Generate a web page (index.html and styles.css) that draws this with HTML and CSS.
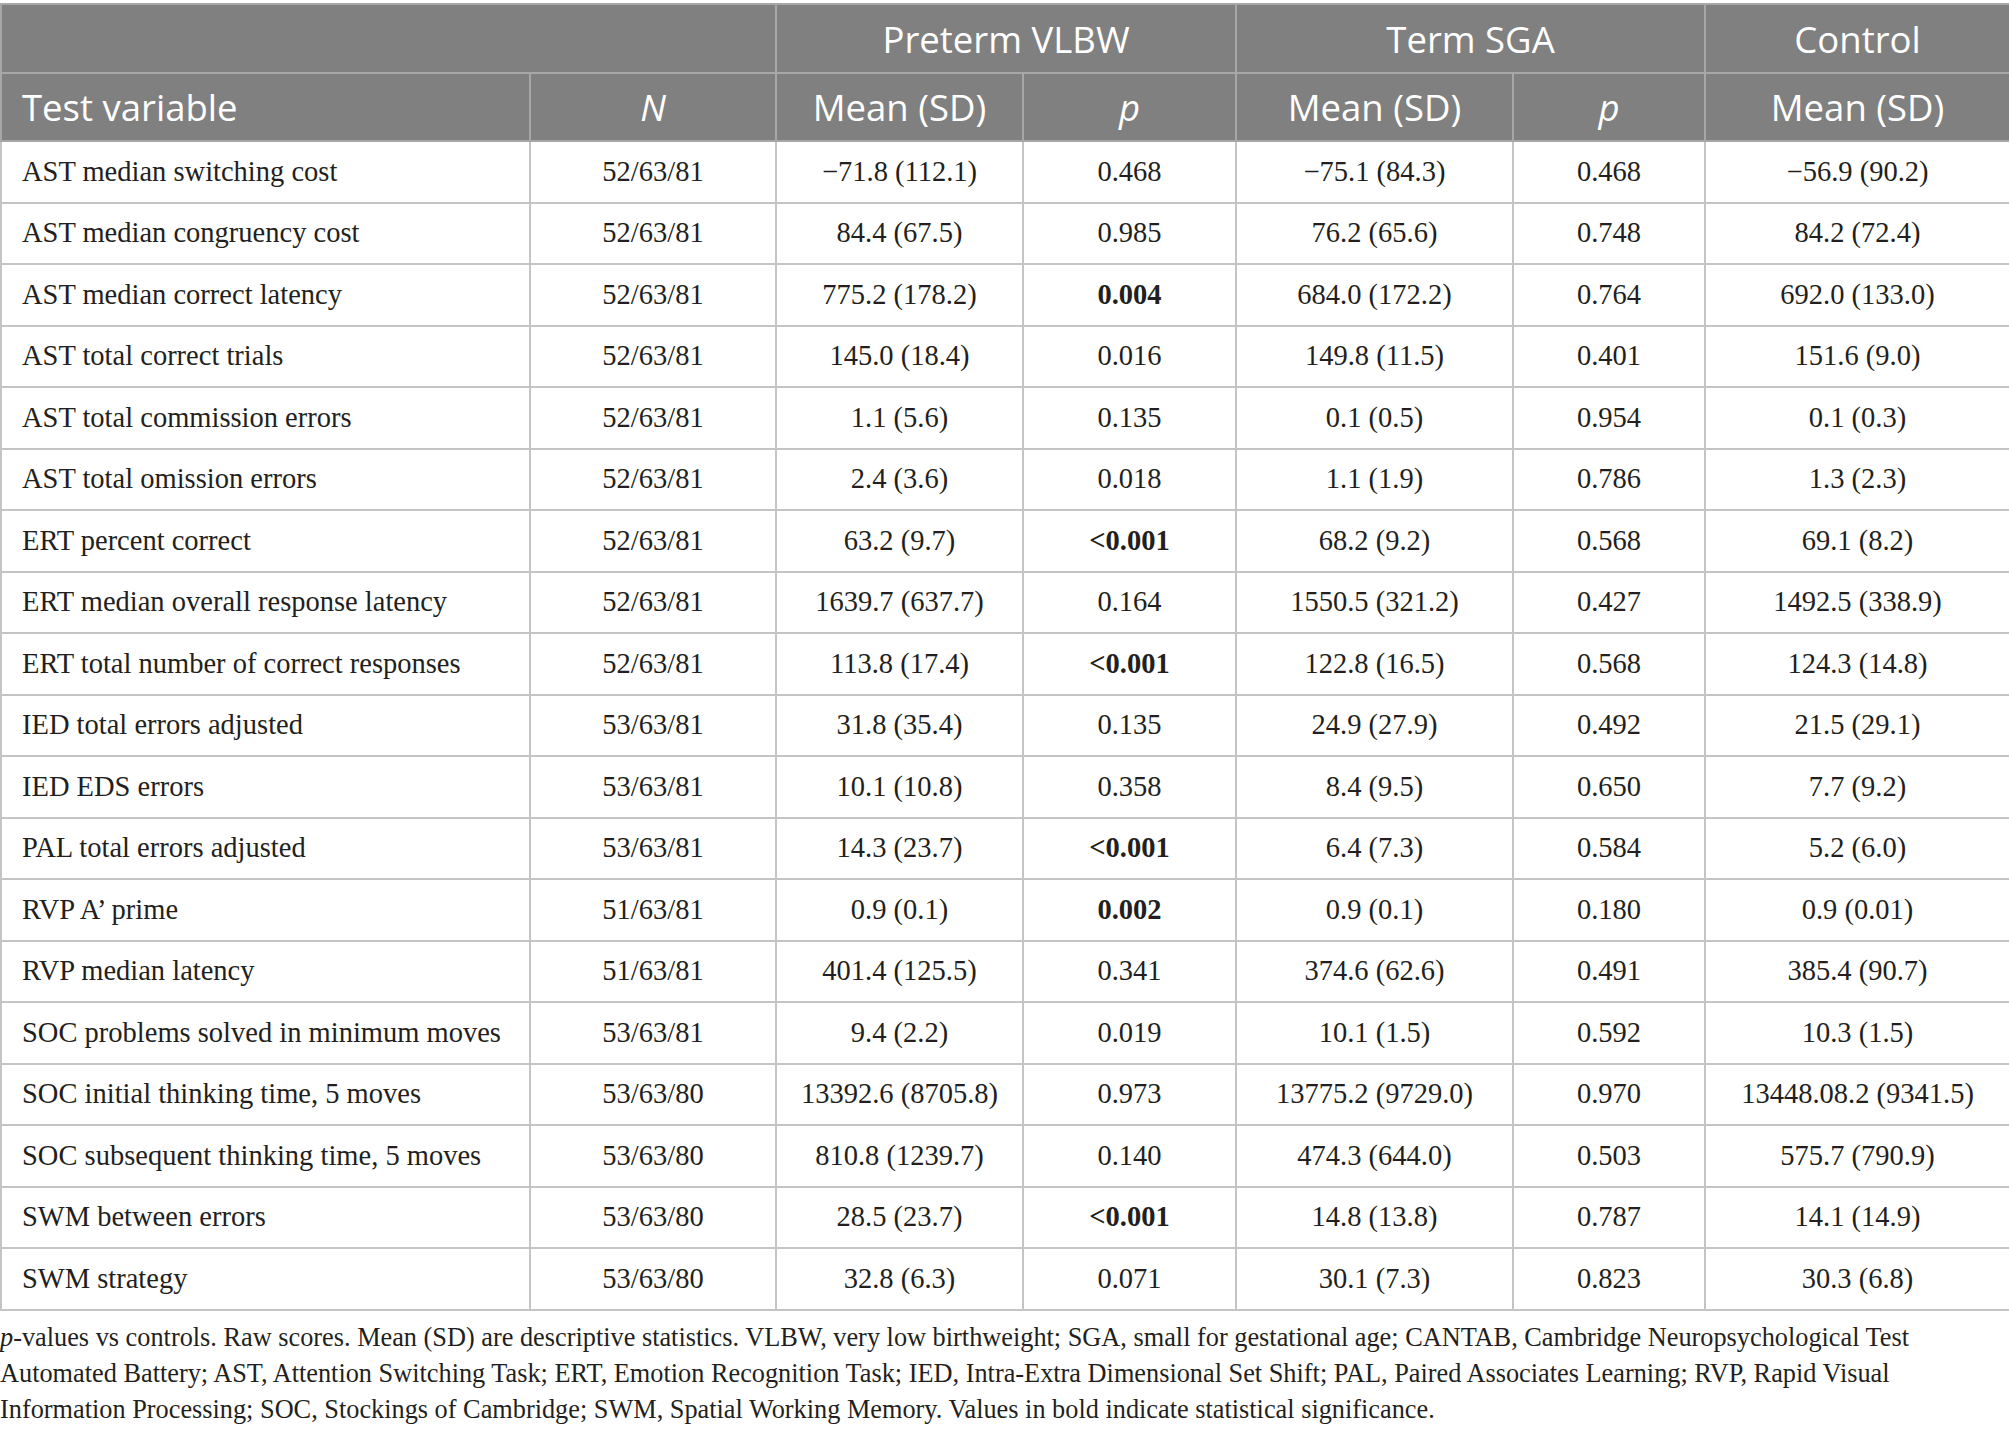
FILE: index.html
```html
<!DOCTYPE html>
<html lang="en">
<head>
    <meta charset="UTF-8">
    <meta name="viewport" content="width=device-width, initial-scale=1.0">
    <title>CANTAB results by group</title>
    <link rel="stylesheet" href="styles.css">
</head>
<body>

<table class="results">
    <colgroup>
        <col class="c-var">
        <col class="c-n">
        <col class="c-mean1">
        <col class="c-p1">
        <col class="c-mean2">
        <col class="c-p2">
        <col class="c-mean3">
    </colgroup>
    <thead>
        <tr class="group-row">
            <th colspan="2"></th>
            <th colspan="2">Preterm VLBW</th>
            <th colspan="2">Term SGA</th>
            <th>Control</th>
        </tr>
        <tr class="label-row">
            <th class="left">Test variable</th>
            <th><i>N</i></th>
            <th>Mean (SD)</th>
            <th><i>p</i></th>
            <th>Mean (SD)</th>
            <th><i>p</i></th>
            <th>Mean (SD)</th>
        </tr>
    </thead>
    <tbody>
        <tr><td class="left">AST median switching cost</td><td>52/63/81</td><td>&minus;71.8 (112.1)</td><td>0.468</td><td>&minus;75.1 (84.3)</td><td>0.468</td><td>&minus;56.9 (90.2)</td></tr>
        <tr><td class="left">AST median congruency cost</td><td>52/63/81</td><td>84.4 (67.5)</td><td>0.985</td><td>76.2 (65.6)</td><td>0.748</td><td>84.2 (72.4)</td></tr>
        <tr><td class="left">AST median correct latency</td><td>52/63/81</td><td>775.2 (178.2)</td><td><b>0.004</b></td><td>684.0 (172.2)</td><td>0.764</td><td>692.0 (133.0)</td></tr>
        <tr><td class="left">AST total correct trials</td><td>52/63/81</td><td>145.0 (18.4)</td><td>0.016</td><td>149.8 (11.5)</td><td>0.401</td><td>151.6 (9.0)</td></tr>
        <tr><td class="left">AST total commission errors</td><td>52/63/81</td><td>1.1 (5.6)</td><td>0.135</td><td>0.1 (0.5)</td><td>0.954</td><td>0.1 (0.3)</td></tr>
        <tr><td class="left">AST total omission errors</td><td>52/63/81</td><td>2.4 (3.6)</td><td>0.018</td><td>1.1 (1.9)</td><td>0.786</td><td>1.3 (2.3)</td></tr>
        <tr><td class="left">ERT percent correct</td><td>52/63/81</td><td>63.2 (9.7)</td><td><b>&lt;0.001</b></td><td>68.2 (9.2)</td><td>0.568</td><td>69.1 (8.2)</td></tr>
        <tr><td class="left">ERT median overall response latency</td><td>52/63/81</td><td>1639.7 (637.7)</td><td>0.164</td><td>1550.5 (321.2)</td><td>0.427</td><td>1492.5 (338.9)</td></tr>
        <tr><td class="left">ERT total number of correct responses</td><td>52/63/81</td><td>113.8 (17.4)</td><td><b>&lt;0.001</b></td><td>122.8 (16.5)</td><td>0.568</td><td>124.3 (14.8)</td></tr>
        <tr><td class="left">IED total errors adjusted</td><td>53/63/81</td><td>31.8 (35.4)</td><td>0.135</td><td>24.9 (27.9)</td><td>0.492</td><td>21.5 (29.1)</td></tr>
        <tr><td class="left">IED EDS errors</td><td>53/63/81</td><td>10.1 (10.8)</td><td>0.358</td><td>8.4 (9.5)</td><td>0.650</td><td>7.7 (9.2)</td></tr>
        <tr><td class="left">PAL total errors adjusted</td><td>53/63/81</td><td>14.3 (23.7)</td><td><b>&lt;0.001</b></td><td>6.4 (7.3)</td><td>0.584</td><td>5.2 (6.0)</td></tr>
        <tr><td class="left">RVP A&rsquo; prime</td><td>51/63/81</td><td>0.9 (0.1)</td><td><b>0.002</b></td><td>0.9 (0.1)</td><td>0.180</td><td>0.9 (0.01)</td></tr>
        <tr><td class="left">RVP median latency</td><td>51/63/81</td><td>401.4 (125.5)</td><td>0.341</td><td>374.6 (62.6)</td><td>0.491</td><td>385.4 (90.7)</td></tr>
        <tr><td class="left">SOC problems solved in minimum moves</td><td>53/63/81</td><td>9.4 (2.2)</td><td>0.019</td><td>10.1 (1.5)</td><td>0.592</td><td>10.3 (1.5)</td></tr>
        <tr><td class="left">SOC initial thinking time, 5 moves</td><td>53/63/80</td><td>13392.6 (8705.8)</td><td>0.973</td><td>13775.2 (9729.0)</td><td>0.970</td><td>13448.08.2 (9341.5)</td></tr>
        <tr><td class="left">SOC subsequent thinking time, 5 moves</td><td>53/63/80</td><td>810.8 (1239.7)</td><td>0.140</td><td>474.3 (644.0)</td><td>0.503</td><td>575.7 (790.9)</td></tr>
        <tr><td class="left">SWM between errors</td><td>53/63/80</td><td>28.5 (23.7)</td><td><b>&lt;0.001</b></td><td>14.8 (13.8)</td><td>0.787</td><td>14.1 (14.9)</td></tr>
        <tr><td class="left">SWM strategy</td><td>53/63/80</td><td>32.8 (6.3)</td><td>0.071</td><td>30.1 (7.3)</td><td>0.823</td><td>30.3 (6.8)</td></tr>
    </tbody>
</table>

<!-- table footnote, line breaks kept as in the source layout -->
<p class="note">
    <i>p</i>-values vs controls. Raw scores. Mean (SD) are descriptive statistics. VLBW, very low birthweight; SGA, small for gestational age; CANTAB, Cambridge Neuropsychological Test<br>
    Automated Battery; AST, Attention Switching Task; ERT, Emotion Recognition Task; IED, Intra-Extra Dimensional Set Shift; PAL, Paired Associates Learning; RVP, Rapid Visual<br>
    Information Processing; SOC, Stockings of Cambridge; SWM, Spatial Working Memory. Values in bold indicate statistical significance.
</p>

</body>
</html>
```

FILE: styles.css
```css
body {
    margin: 0;
    padding: 0;
    background-color: #fff;
    color: #231f20;
    font-family: 'Liberation Serif', 'Times New Roman', serif;
}
.results {
    width: 2009px;
    margin-top: 3px;
    border-collapse: collapse;
    table-layout: fixed;
}
.c-var { width: 529px; }
.c-n { width: 246px; }
.c-mean1 { width: 247px; }
.c-p1 { width: 213px; }
.c-mean2 { width: 277px; }
.c-p2 { width: 192px; }
.c-mean3 { width: 305px; }

.results th {
    background-color: #7f807f;
    color: #fff;
    font-family: 'Open Sans', 'Noto Sans', sans-serif;
    font-weight: normal;
    font-size: 36.5px;
    text-align: center;
    border: 2px solid #a6a7a6;
    padding: 0 20px;
}
.group-row th {
    height: 67px;
}
.label-row th {
    height: 66px;
}
.results td {
    height: 59.5px;
    border: 2px solid #c4c4c4;
    font-size: 28.5px;
    text-align: center;
    padding: 0 20px;
    white-space: nowrap;
}
.results .left {
    text-align: left;
    padding-left: 20px;
}
.results td b {
    font-weight: bold;
}
.note {
    margin: 9px 0 0 0;
    font-size: 26.3px;
    line-height: 36px;
    white-space: nowrap;
}
```
